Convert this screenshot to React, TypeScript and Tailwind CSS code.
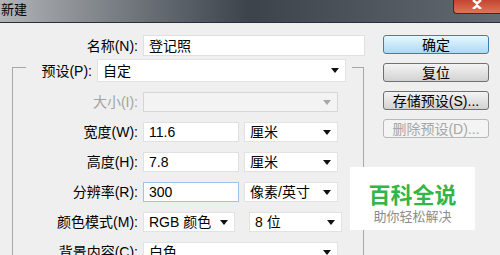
import React from "react";

const font = "font-['Liberation_Sans','Noto_Sans_CJK_SC',sans-serif]";

function Arrow({ disabled }: { disabled?: boolean }) {
  return (
    <svg width="8" height="5" viewBox="0 0 8 5" className="shrink-0">
      <path d="M0 0H8L4 5Z" fill={disabled ? "#a8a8a8" : "#111"} />
    </svg>
  );
}

function Select({
  value,
  w,
  disabled,
}: {
  value?: string;
  w: string;
  disabled?: boolean;
}) {
  return (
    <div
      className={`${w} h-full flex items-center justify-between pl-[5px] pr-[6px] border ${
        disabled ? "bg-[#f3f3f3] border-[#d6d6d6]" : "bg-white border-[#e2e2e2]"
      }`}
    >
      <span className="text-[14px] leading-none whitespace-nowrap">{value}</span>
      <Arrow disabled={disabled} />
    </div>
  );
}

function Input({ value, w, focus }: { value: string; w: string; focus?: boolean }) {
  return (
    <div
      className={`${w} h-full flex items-center pl-[5px] bg-white border ${
        focus ? "border-[#9cc3e6]" : "border-[#e0e0e0]"
      }`}
    >
      <span className="text-[14px] leading-none">{value}</span>
    </div>
  );
}

function Row({
  label,
  disabled,
  children,
}: {
  label: string;
  disabled?: boolean;
  children: React.ReactNode;
}) {
  return (
    <div className="flex h-[20px] items-center gap-[5px]">
      <div
        className={`w-[125px] text-right text-[14px] leading-none whitespace-nowrap ${
          disabled ? "text-[#a3a3a3]" : "text-black"
        }`}
      >
        {label}
      </div>
      <div className="flex h-full gap-[5px]">{children}</div>
    </div>
  );
}

function Button({
  children,
  primary,
  disabled,
}: {
  children: React.ReactNode;
  primary?: boolean;
  disabled?: boolean;
}) {
  const tone = primary
    ? "border-[#3c7fb1] bg-gradient-to-b from-[#e9f6fd] to-[#a9daf5]"
    : disabled
    ? "border-[#b5b9bc] bg-[#f4f4f4] text-[#a6a6a6]"
    : "border-[#707070] bg-gradient-to-b from-[#f4f4f4] to-[#d2d2d2]";
  return (
    <div
      className={`h-[19px] w-[106px] rounded-[3px] border flex items-center justify-center text-[14px] leading-none ${tone}`}
    >
      {children}
    </div>
  );
}

export default function App() {
  return (
    <div className={`relative w-[500px] h-[255px] overflow-hidden bg-[#efefef] text-black ${font}`}>
      {/* title bar */}
      <div className="relative h-[23px] border-b border-[#2a2f35] bg-gradient-to-r from-[#b2b5b8] via-[#3c434b] to-[#646a71]">
        <div className="pl-[1px] pt-[2px] text-[13px] leading-[16px] text-black">新建</div>
        <div className="absolute right-0 top-0 w-[47px] h-[14px] rounded-bl-[4px] border border-t-0 border-r-0 border-[#4a2620] bg-gradient-to-b from-[#c4442f] to-[#de7358] flex justify-center">
          <svg width="10" height="9" viewBox="0 0 10 9">
            <path d="M1 0L5 3.5L9 0M1 9L5 5.5L9 9" stroke="#fff" strokeWidth="2.4" fill="none" />
          </svg>
        </div>
      </div>

      <div className="flex">
        {/* form */}
        <div className="w-[370px]">
          <div className="mt-[12px] flex h-[21px] items-center gap-[5px]">
            <div className="w-[138px] text-right text-[14px] leading-none">名称(N):</div>
            <Input value="登记照" w="w-[222px]" />
          </div>

          <div className="mt-[11px] ml-[12px] w-[352px] h-[200px] border border-b-0 border-[#a8a8a8]">
            <div className="-mt-[9px] ml-[13px] w-[326px] h-[23px] flex items-center bg-[#efefef] gap-[5px]">
              <div className="w-[66px] text-right text-[14px] leading-none">预设(P):</div>
              <Select value="自定" w="w-[249px]" />
            </div>
            <div className="mt-[10px] flex flex-col gap-[10px]">
              <Row label="大小(I):" disabled>
                <Select w="w-[195px]" disabled />
              </Row>
              <Row label="宽度(W):">
                <Input value="11.6" w="w-[96px]" />
                <Select value="厘米" w="w-[94px]" />
              </Row>
              <Row label="高度(H):">
                <Input value="7.8" w="w-[96px]" />
                <Select value="厘米" w="w-[94px]" />
              </Row>
              <Row label="分辨率(R):">
                <Input value="300" w="w-[96px]" focus />
                <Select value="像素/英寸" w="w-[94px]" />
              </Row>
              <Row label="颜色模式(M):">
                <Select value="RGB 颜色" w="w-[92px]" />
                <div className="w-[4px]" />
                <Select value="8 位" w="w-[93px]" />
              </Row>
              <Row label="背景内容(C):">
                <Select value="白色" w="w-[195px]" />
              </Row>
            </div>
          </div>
        </div>

        {/* buttons */}
        <div className="ml-[13px] mt-[12px] flex flex-col gap-[9px]">
          <Button primary>确定</Button>
          <Button>复位</Button>
          <Button>存储预设(S)...</Button>
          <Button disabled>删除预设(D)...</Button>
        </div>
      </div>

      {/* watermark */}
      <div className="absolute left-[350px] top-[167px] w-[125px] h-[63px] bg-white flex flex-col items-center pt-[13px]">
        <div className="text-[22px] leading-[26px] font-bold text-[#33b548] font-['Noto_Sans_CJK_SC',sans-serif]">百科全说</div>
        <div className="mt-[2px] text-[13px] leading-[15px] text-[#8c8c8c] font-['Noto_Sans_CJK_SC',sans-serif]">助你轻松解决</div>
      </div>
    </div>
  );
}
